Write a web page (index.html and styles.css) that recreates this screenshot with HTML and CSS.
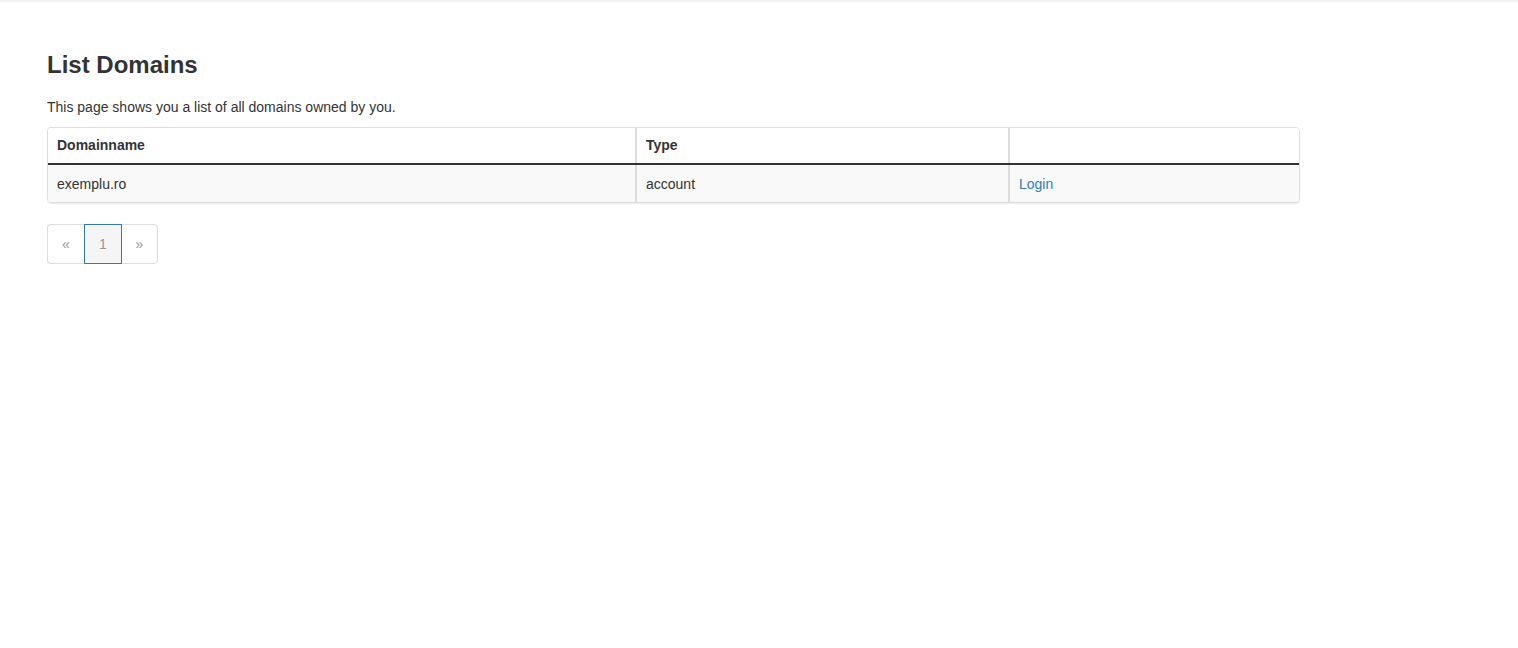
FILE: index.html
```html
<!DOCTYPE html>
<html>
<head>
<meta charset="utf-8">
<link rel="stylesheet" href="styles.css">
</head>
<body>
<div class="topbar"></div>
<main class="content">
  <h1 class="title">List Domains</h1>
  <p class="intro">This page shows you a list of all domains owned by you.</p>
  <div class="table-wrap">
    <table class="domains">
      <thead>
        <tr>
          <th class="c1">Domainname</th>
          <th class="c2">Type</th>
          <th class="c3"></th>
        </tr>
      </thead>
      <tbody>
        <tr>
          <td>exemplu.ro</td>
          <td>account</td>
          <td><a href="#" class="link">Login</a></td>
        </tr>
      </tbody>
    </table>
  </div>
  <ul class="pager">
    <li class="page first">&laquo;</li>
    <li class="page active">1</li>
    <li class="page last">&raquo;</li>
  </ul>
</main>
</body>
</html>
```

FILE: styles.css
```css
html, body {
  margin: 0;
  padding: 0;
  background: #fff;
}
body {
  font-family: "Liberation Sans", Arial, sans-serif;
  font-size: 14px;
  line-height: 20px;
  color: #333;
}
.topbar {
  height: 3px;
  background: linear-gradient(#f0f0f0, #fafafa);
}
.content {
  padding: 0 47px;
}
.title {
  margin: 48px 0 0;
  font-size: 24px;
  line-height: 27px;
  font-weight: bold;
  color: #333;
}
.intro {
  margin: 19px 0 10px;
}
.table-wrap {
  width: 1251px;
  border: 1px solid #ddd;
  border-radius: 4px;
  box-shadow: 0 1px 1px rgba(0,0,0,0.08);
  overflow: hidden;
}
.domains {
  width: 100%;
  border-collapse: collapse;
  table-layout: fixed;
}
.domains th, .domains td {
  padding: 8px 9px;
  text-align: left;
  vertical-align: top;
  line-height: 20px;
}
.domains th {
  padding-top: 7px;
  font-weight: bold;
  border-bottom: 2px solid #333;
  background: #fff;
}
.domains th + th, .domains td + td {
  border-left: 2px solid #ddd;
}
.domains td {
  padding-top: 9px;
  background: #f9f9f9;
}
.c1 { width: 569px; }
.c2 { width: 353px; }
.link {
  color: #337ab7;
  text-decoration: none;
}
.pager {
  display: flex;
  margin: 21px 0 0;
  padding: 0;
  list-style: none;
}
.page {
  width: 35px;
  height: 38px;
  line-height: 38px;
  text-align: center;
  color: #999;
  border: 1px solid #ddd;
  background: #fff;
}
.page.first {
  width: 36px;
  border-right: 0;
  border-radius: 4px 0 0 4px;
}
.page.last {
  margin-left: -1px;
  border-radius: 0 4px 4px 0;
}
.page.active {
  width: 36px;
  background: #f5f5f5;
  border-color: #337ab7;
  position: relative;
}
```
